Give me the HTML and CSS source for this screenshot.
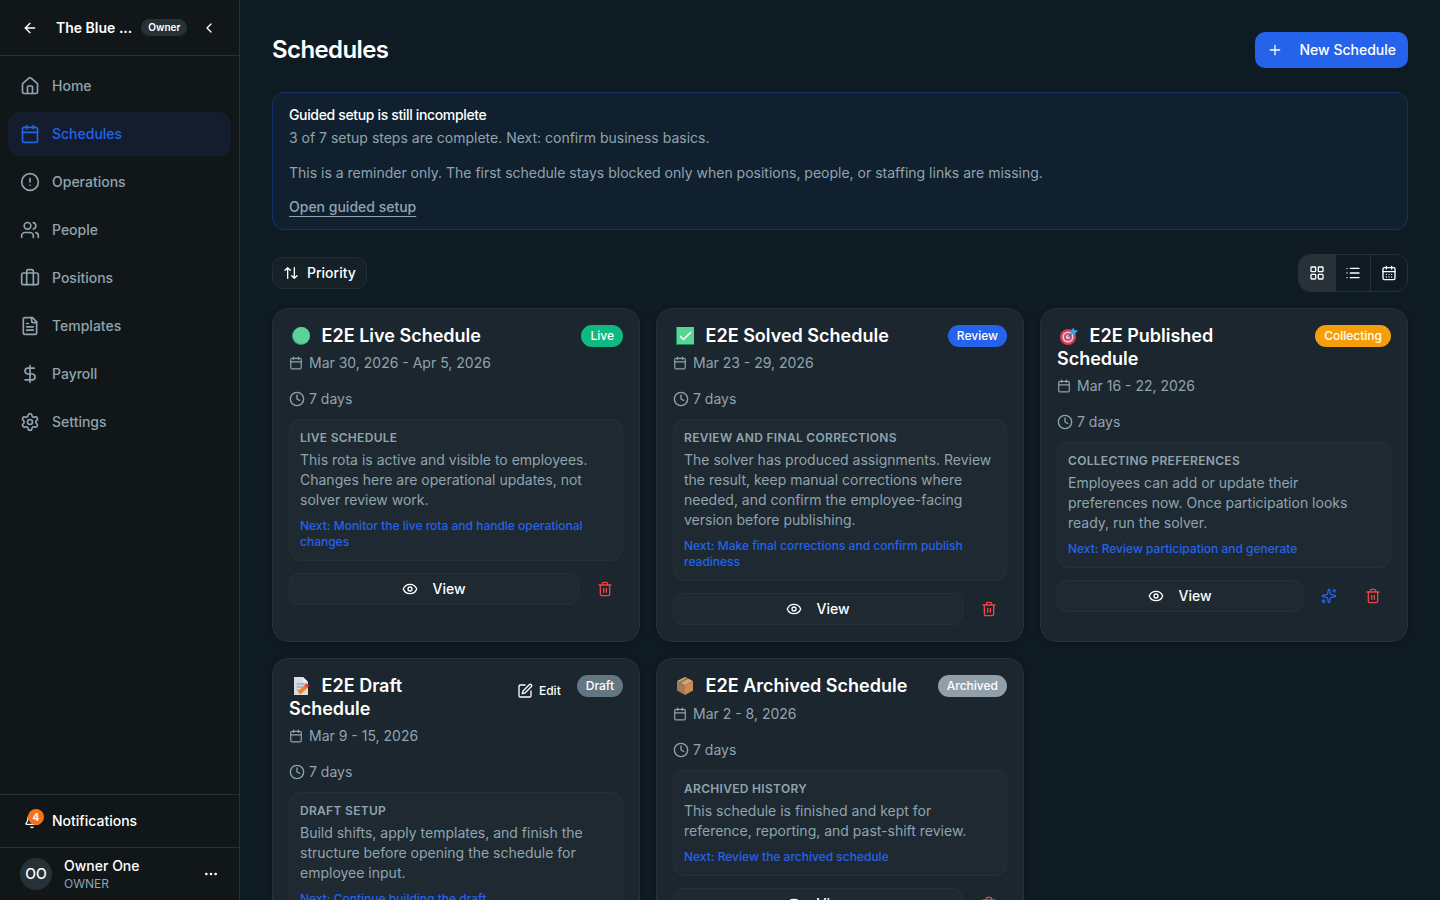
FILE: index.html
```html
<!DOCTYPE html>
<html lang="en">
  <head>
    <meta charset="UTF-8">
    <title>Schedules</title>
    <link rel="stylesheet" href="styles.css">
  </head>
  <body>
    <!-- shared icons -->
    <svg class="sprite">
      <symbol id="arrow-left" viewBox="0 0 24 24"><path d="m12 19-7-7 7-7"/><path d="M19 12H5"/></symbol>
      <symbol id="chevron-left" viewBox="0 0 24 24"><path d="m15 18-6-6 6-6"/></symbol>
      <symbol id="house" viewBox="0 0 24 24"><path d="M15 21v-8a1 1 0 0 0-1-1h-4a1 1 0 0 0-1 1v8"/><path d="M3 10a2 2 0 0 1 .709-1.528l7-5.999a2 2 0 0 1 2.582 0l7 5.999A2 2 0 0 1 21 10v9a2 2 0 0 1-2 2H5a2 2 0 0 1-2-2z"/></symbol>
      <symbol id="calendar" viewBox="0 0 24 24"><path d="M8 2v4M16 2v4"/><rect width="18" height="18" x="3" y="4" rx="2"/><path d="M3 10h18"/></symbol>
      <symbol id="calendar-days" viewBox="0 0 24 24"><path d="M8 2v4M16 2v4"/><rect width="18" height="18" x="3" y="4" rx="2"/><path d="M3 10h18M8 14h.01M12 14h.01M16 14h.01M8 18h.01M12 18h.01M16 18h.01"/></symbol>
      <symbol id="alert" viewBox="0 0 24 24"><circle cx="12" cy="12" r="10"/><path d="M12 8v4M12 16h.01"/></symbol>
      <symbol id="users" viewBox="0 0 24 24"><path d="M16 21v-2a4 4 0 0 0-4-4H6a4 4 0 0 0-4 4v2"/><circle cx="9" cy="7" r="4"/><path d="M22 21v-2a4 4 0 0 0-3-3.870M16 3.130a4 4 0 0 1 0 7.750"/></symbol>
      <symbol id="briefcase" viewBox="0 0 24 24"><path d="M16 20V4a2 2 0 0 0-2-2h-4a2 2 0 0 0-2 2v16"/><rect width="20" height="14" x="2" y="6" rx="2"/></symbol>
      <symbol id="file-text" viewBox="0 0 24 24"><path d="M15 2H6a2 2 0 0 0-2 2v16a2 2 0 0 0 2 2h12a2 2 0 0 0 2-2V7Z"/><path d="M14 2v4a2 2 0 0 0 2 2h4M10 9H8M16 13H8M16 17H8"/></symbol>
      <symbol id="dollar" viewBox="0 0 24 24"><path d="M12 2v20M17 5H9.500a3.500 3.500 0 0 0 0 7h5a3.500 3.500 0 0 1 0 7H6"/></symbol>
      <symbol id="settings" viewBox="0 0 24 24"><path d="M9.671 4.136a2.340 2.340 0 0 1 4.659 0 2.340 2.340 0 0 0 3.319 1.915 2.340 2.340 0 0 1 2.330 4.033 2.340 2.340 0 0 0 0 3.831 2.340 2.340 0 0 1-2.330 4.033 2.340 2.340 0 0 0-3.319 1.915 2.340 2.340 0 0 1-4.659 0 2.340 2.340 0 0 0-3.320-1.915 2.340 2.340 0 0 1-2.330-4.033 2.340 2.340 0 0 0 0-3.831A2.340 2.340 0 0 1 6.350 6.051a2.340 2.340 0 0 0 3.319-1.915"/><circle cx="12" cy="12" r="3"/></symbol>
      <symbol id="bell" viewBox="0 0 24 24"><path d="M10.268 21a2 2 0 0 0 3.464 0"/><path d="M3.262 15.326A1 1 0 0 0 4 17h16a1 1 0 0 0 .740-1.673C19.410 13.956 18 12.499 18 8A6 6 0 0 0 6 8c0 4.499-1.411 5.956-2.738 7.326"/></symbol>
      <symbol id="dots" viewBox="0 0 24 24"><circle cx="12" cy="12" r="1"/><circle cx="19" cy="12" r="1"/><circle cx="5" cy="12" r="1"/></symbol>
      <symbol id="plus" viewBox="0 0 24 24"><path d="M5 12h14M12 5v14"/></symbol>
      <symbol id="sort" viewBox="0 0 24 24"><path d="m3 8 4-4 4 4M7 4v16M21 16l-4 4-4-4M17 20V4"/></symbol>
      <symbol id="grid" viewBox="0 0 24 24"><rect width="7" height="7" x="3" y="3" rx="1"/><rect width="7" height="7" x="14" y="3" rx="1"/><rect width="7" height="7" x="14" y="14" rx="1"/><rect width="7" height="7" x="3" y="14" rx="1"/></symbol>
      <symbol id="list" viewBox="0 0 24 24"><path d="M3 5h.01M3 12h.01M3 19h.01M8 5h13M8 12h13M8 19h13"/></symbol>
      <symbol id="clock" viewBox="0 0 24 24"><circle cx="12" cy="12" r="10"/><path d="M12 6v6l4 2"/></symbol>
      <symbol id="eye" viewBox="0 0 24 24"><path d="M2.062 12.348a1 1 0 0 1 0-.696 10.750 10.750 0 0 1 19.876 0 1 1 0 0 1 0 .696 10.750 10.750 0 0 1-19.876 0"/><circle cx="12" cy="12" r="3"/></symbol>
      <symbol id="trash" viewBox="0 0 24 24"><path d="M3 6h18M19 6v14a2 2 0 0 1-2 2H7a2 2 0 0 1-2-2V6M8 6V4a2 2 0 0 1 2-2h4a2 2 0 0 1 2 2v2M10 11v6M14 11v6"/></symbol>
      <symbol id="sparkles" viewBox="0 0 24 24"><path d="M11.017 2.814a1 1 0 0 1 1.966 0l1.051 5.558a2 2 0 0 0 1.594 1.594l5.558 1.051a1 1 0 0 1 0 1.966l-5.558 1.051a2 2 0 0 0-1.594 1.594l-1.051 5.558a1 1 0 0 1-1.966 0l-1.051-5.558a2 2 0 0 0-1.594-1.594l-5.558-1.051a1 1 0 0 1 0-1.966l5.558-1.051a2 2 0 0 0 1.594-1.594z"/><path d="M20 2v4M22 4h-4"/><circle cx="4" cy="20" r="2"/></symbol>
      <symbol id="edit" viewBox="0 0 24 24"><path d="M12 3H5a2 2 0 0 0-2 2v14a2 2 0 0 0 2 2h14a2 2 0 0 0 2-2v-7"/><path d="M18.375 2.625a1 1 0 0 1 3 3l-9.013 9.014a2 2 0 0 1-.853.505l-2.873.840a.5.5 0 0 1-.620-.620l.840-2.873a2 2 0 0 1 .506-.852z"/></symbol>
    </svg>

    <div class="app">
      <aside class="sidebar">
        <header class="sidebar-head">
          <svg class="icon"><use href="#arrow-left"/></svg>
          <span class="workspace">The Blue ...</span>
          <span class="role">Owner</span>
          <svg class="icon"><use href="#chevron-left"/></svg>
        </header>

        <nav class="nav">
          <a class="nav-item"><svg class="icon icon-lg"><use href="#house"/></svg>Home</a>
          <a class="nav-item active"><svg class="icon icon-lg"><use href="#calendar"/></svg>Schedules</a>
          <a class="nav-item"><svg class="icon icon-lg"><use href="#alert"/></svg>Operations</a>
          <a class="nav-item"><svg class="icon icon-lg"><use href="#users"/></svg>People</a>
          <a class="nav-item"><svg class="icon icon-lg"><use href="#briefcase"/></svg>Positions</a>
          <a class="nav-item"><svg class="icon icon-lg"><use href="#file-text"/></svg>Templates</a>
          <a class="nav-item"><svg class="icon icon-lg"><use href="#dollar"/></svg>Payroll</a>
          <a class="nav-item"><svg class="icon icon-lg"><use href="#settings"/></svg>Settings</a>
        </nav>

        <div class="notifications">
          <span class="bell"><svg class="icon"><use href="#bell"/></svg><span class="count">4</span></span>
          Notifications
        </div>
        <div class="user">
          <span class="avatar">OO</span>
          <div class="user-text">
            <div class="user-name">Owner One</div>
            <div class="user-role">OWNER</div>
          </div>
          <svg class="icon"><use href="#dots"/></svg>
        </div>
      </aside>

      <main class="main">
        <header class="page-head">
          <h1>Schedules</h1>
          <button class="btn-new"><svg class="icon"><use href="#plus"/></svg>New Schedule</button>
        </header>

        <section class="banner">
          <h2>Guided setup is still incomplete</h2>
          <p>3 of 7 setup steps are complete. Next: confirm business basics.</p>
          <p>This is a reminder only. The first schedule stays blocked only when positions, people, or staffing links are missing.</p>
          <a>Open guided setup</a>
        </section>

        <div class="toolbar">
          <button class="btn-sort"><svg class="icon"><use href="#sort"/></svg>Priority</button>
          <div class="views">
            <button class="selected"><svg class="icon"><use href="#grid"/></svg></button>
            <button><svg class="icon"><use href="#list"/></svg></button>
            <button><svg class="icon"><use href="#calendar-days"/></svg></button>
          </div>
        </div>

        <section class="cards">
          <article class="card">
            <div class="card-head">
              <h3><svg class="emoji" viewBox="0 0 18 18"><circle cx="9" cy="9" r="9" fill="#3f9a92"/><circle cx="9.500" cy="8.500" r="8.500" fill="#5bd493"/></svg>E2E Live Schedule</h3>
              <span class="badge live">Live</span>
            </div>
            <div class="date"><svg class="icon icon-sm"><use href="#calendar"/></svg>Mar 30, 2026 - Apr 5, 2026</div>
            <div class="days"><svg class="icon"><use href="#clock"/></svg>7 days</div>
            <div class="stage">
              <h4>Live schedule</h4>
              <p>This rota is active and visible to employees. Changes here are operational updates, not solver review work.</p>
              <div class="next">Next: Monitor the live rota and handle operational changes</div>
            </div>
            <div class="actions">
              <button class="btn-view"><svg class="icon"><use href="#eye"/></svg>View</button>
              <button class="btn-icon danger"><svg class="icon"><use href="#trash"/></svg></button>
            </div>
          </article>

          <article class="card">
            <div class="card-head">
              <h3><svg class="emoji" viewBox="0 0 18 18"><path fill="#168b61" d="M0 0h18v18H0z"/><path fill="#5bd493" d="M1 0h17v17H1z"/><path d="m4 9 3.500 3.500L15 5" fill="none" stroke="#fff" stroke-width="1.500"/></svg>E2E Solved Schedule</h3>
              <span class="badge review">Review</span>
            </div>
            <div class="date"><svg class="icon icon-sm"><use href="#calendar"/></svg>Mar 23 - 29, 2026</div>
            <div class="days"><svg class="icon"><use href="#clock"/></svg>7 days</div>
            <div class="stage">
              <h4>Review and final corrections</h4>
              <p>The solver has produced assignments. Review the result, keep manual corrections where needed, and confirm the employee-facing version before publishing.</p>
              <div class="next">Next: Make final corrections and confirm publish readiness</div>
            </div>
            <div class="actions">
              <button class="btn-view"><svg class="icon"><use href="#eye"/></svg>View</button>
              <button class="btn-icon danger"><svg class="icon"><use href="#trash"/></svg></button>
            </div>
          </article>

          <article class="card">
            <div class="card-head">
              <h3><svg class="emoji" viewBox="0 0 18 18"><circle cx="8" cy="10" r="8" fill="#d83b56"/><circle cx="8" cy="10" r="5.600" fill="#e4d3e2"/><circle cx="8" cy="10" r="4.100" fill="#d9486a"/><circle cx="8" cy="10" r="2" fill="#ead6e3"/><path d="m8 10 5-5" stroke="#2478b8" stroke-width="1.300"/><path fill="#32a5e8" d="m10.500 4.500 3-4 1 2.500 3.500.5-3.500 4-3.500-.5z"/></svg>E2E Published<br>Schedule</h3>
              <span class="badge collecting">Collecting</span>
            </div>
            <div class="date"><svg class="icon icon-sm"><use href="#calendar"/></svg>Mar 16 - 22, 2026</div>
            <div class="days"><svg class="icon"><use href="#clock"/></svg>7 days</div>
            <div class="stage">
              <h4>Collecting preferences</h4>
              <p>Employees can add or update their preferences now. Once participation looks ready, run the solver.</p>
              <div class="next">Next: Review participation and generate</div>
            </div>
            <div class="actions">
              <button class="btn-view"><svg class="icon"><use href="#eye"/></svg>View</button>
              <button class="btn-icon magic"><svg class="icon"><use href="#sparkles"/></svg></button>
              <button class="btn-icon danger"><svg class="icon"><use href="#trash"/></svg></button>
            </div>
          </article>

          <article class="card">
            <div class="card-head">
              <h3><svg class="emoji" viewBox="0 0 18 18"><path fill="#d9dce1" d="M2 0h9l5 5v13H2z"/><path fill="#f2f3f5" d="M11 0v5h5z"/><path d="M4.500 7h8M4.500 10h7M4.500 13h4" stroke="#8795a6"/><path d="m7 16 7.500-7" stroke="#f58220" stroke-width="3.800"/><path d="m13.700 9.700 2.300-2.100" stroke="#e03f56" stroke-width="3.800"/></svg>E2E Draft<br>Schedule</h3>
              <button class="btn-edit"><svg class="icon"><use href="#edit"/></svg>Edit</button>
              <span class="badge draft">Draft</span>
            </div>
            <div class="date"><svg class="icon icon-sm"><use href="#calendar"/></svg>Mar 9 - 15, 2026</div>
            <div class="days"><svg class="icon"><use href="#clock"/></svg>7 days</div>
            <div class="stage">
              <h4>Draft setup</h4>
              <p>Build shifts, apply templates, and finish the structure before opening the schedule for employee input.</p>
              <div class="next">Next: Continue building the draft</div>
            </div>
            <div class="actions">
              <button class="btn-view"><svg class="icon"><use href="#eye"/></svg>View</button>
              <button class="btn-icon danger"><svg class="icon"><use href="#trash"/></svg></button>
            </div>
          </article>

          <article class="card">
            <div class="card-head">
              <h3><svg class="emoji" viewBox="0 0 18 18"><path fill="#d8a274" d="m9 0 8 4-8 4.500L1 4z"/><path fill="#a87957" d="m1 4 8 4.500V18l-8-4.500z"/><path fill="#c98b4e" d="m17 4-8 4.500V18l8-4.500z"/><path fill="#8b7a56" d="m10.500.8 2 1L5 6v3L3 8V5z"/></svg>E2E Archived Schedule</h3>
              <span class="badge archived">Archived</span>
            </div>
            <div class="date"><svg class="icon icon-sm"><use href="#calendar"/></svg>Mar 2 - 8, 2026</div>
            <div class="days"><svg class="icon"><use href="#clock"/></svg>7 days</div>
            <div class="stage">
              <h4>Archived history</h4>
              <p>This schedule is finished and kept for reference, reporting, and past-shift review.</p>
              <div class="next">Next: Review the archived schedule</div>
            </div>
            <div class="actions">
              <button class="btn-view"><svg class="icon"><use href="#eye"/></svg>View</button>
              <button class="btn-icon danger"><svg class="icon"><use href="#trash"/></svg></button>
            </div>
          </article>
        </section>
      </main>
    </div>
  </body>
</html>
```

FILE: styles.css
```css
* { box-sizing: border-box; }
html, body { margin: 0; height: 100%; overflow: hidden; }
body {
    background: #0f1b22;
    color: #fff;
    font: 14px/20px Inter, sans-serif;
}
h1, h2, h3, h4, p { margin: 0; }
button {
    margin: 0;
    padding: 0;
    border: 0;
    background: none;
    color: inherit;
    font: inherit;
    font-weight: 500;
    display: flex;
    align-items: center;
    justify-content: center;
}

.sprite { display: none; }
.icon {
    width: 16px;
    height: 16px;
    flex: none;
    fill: none;
    stroke: currentColor;
    stroke-width: 2;
    stroke-linecap: round;
    stroke-linejoin: round;
}
.icon-lg { width: 20px; height: 20px; }
.icon-sm { width: 14px; height: 14px; }

.app { display: flex; height: 100%; overflow: hidden; }

/* sidebar */
.sidebar {
    width: 240px;
    flex: none;
    display: flex;
    flex-direction: column;
    background: #111618;
    border-right: 1px solid #263238;
}
.sidebar-head {
    height: 56px;
    display: flex;
    align-items: center;
    padding: 0 22px;
    border-bottom: 1px solid #263238;
}
.workspace { margin-left: 18px; font-weight: 600; white-space: nowrap; }
.role {
    margin: 0 auto 0 9px;
    padding: 0 7px;
    border-radius: 9px;
    background: #263238;
    font-size: 10px;
    font-weight: 600;
    line-height: 17px;
}
.nav {
    flex: 1;
    display: flex;
    flex-direction: column;
    gap: 4px;
    padding: 8px;
}
.nav-item {
    height: 44px;
    display: flex;
    align-items: center;
    gap: 12px;
    padding: 0 12px;
    border-radius: 12px;
    color: #90a4ae;
    font-weight: 500;
}
.nav-item.active { background: #141d2e; color: #2563eb; }
.notifications {
    height: 53px;
    display: flex;
    align-items: center;
    gap: 12px;
    padding-left: 24px;
    border-top: 1px solid #263238;
    font-weight: 500;
}
.bell { position: relative; display: flex; }
.count {
    position: absolute;
    left: 4px;
    top: -4px;
    width: 16px;
    height: 16px;
    border-radius: 50%;
    background: #f97316;
    font-size: 10px;
    font-weight: 700;
    line-height: 16px;
    text-align: center;
}
.user {
    height: 53px;
    display: flex;
    align-items: center;
    gap: 12px;
    padding: 0 20px;
    border-top: 1px solid #263238;
}
.avatar {
    width: 32px;
    height: 32px;
    border-radius: 50%;
    background: #263238;
    font-weight: 500;
    line-height: 32px;
    text-align: center;
}
.user-text { flex: 1; }
.user-name { font-weight: 500; line-height: 18px; }
.user-role { color: #90a4ae; font-size: 12px; line-height: 17px; }

/* page */
.main { flex: 1; padding: 32px 32px 0; }
.page-head { display: flex; align-items: center; justify-content: space-between; }
h1 { font-size: 24px; font-weight: 600; line-height: 32px; letter-spacing: -0.025em; }
.btn-new {
    height: 36px;
    gap: 16px;
    padding: 0 12px;
    border-radius: 10px;
    background: #2563eb;
}
.banner {
    height: 138px;
    margin-top: 24px;
    padding: 12px 16px;
    border: 1px solid #17316c;
    border-radius: 12px;
    background: #10202f;
    color: #90a4ae;
}
.banner h2 {
    color: #fff;
    font-size: 14px;
    font-weight: 500;
    letter-spacing: -0.025em;
    margin-bottom: 2px;
}
.banner p { line-height: 22.75px; margin-bottom: 12px; }
.banner a {
    font-weight: 500;
    text-decoration: underline;
    text-underline-offset: 4px;
}

.toolbar {
    display: flex;
    align-items: center;
    justify-content: space-between;
    margin: 24px 0 16px;
}
.btn-sort {
    height: 32px;
    gap: 8px;
    padding: 0 10px;
    border: 1px solid #222e35;
    border-radius: 10px;
    background: #152127;
}
.views {
    display: flex;
    border: 1px solid #263238;
    border-radius: 12px;
    overflow: hidden;
}
.views button { width: 36px; height: 36px; }
.views button:nth-child(2) { box-shadow: inset -1px 0 #263238; }
.views .selected { background: #263238; box-shadow: 1px 0 #263238; }

/* schedule cards */
.cards { display: grid; grid-template-columns: repeat(3, 1fr); gap: 16px; }
.card {
    padding: 16px;
    border: 1px solid #263238;
    border-radius: 16px;
    background: #1b262e;
    box-shadow: 0 1px 4px rgba(0, 0, 0, .25);
}
.card-head { display: flex; align-items: flex-start; gap: 8px; margin-bottom: 5.8px; }
.card h3 { flex: 1; font-size: 18px; font-weight: 600; line-height: 22.5px; }
.emoji { width: 18px; height: 18px; margin: 0 11.6px 0 3px; vertical-align: -3px; }
.badge {
    padding: 0 9px;
    border-radius: 11px;
    font-size: 12px;
    font-weight: 500;
    line-height: 22px;
}
.live { background: #10b981; }
.review { background: #2563eb; }
.collecting { background: #f59e0b; }
.draft { background: #64767f; }
.archived { background: #919fab; }
.btn-edit { height: 32px; gap: 6px; padding: 0 8px; font-size: 12px; }

.date, .days { display: flex; align-items: center; color: #90a4ae; }
.date { gap: 6px; margin-bottom: 16px; }
.days { gap: 4px; margin-bottom: 10px; }
.stage {
    padding: 10px;
    border: 1px solid #26323a;
    border-radius: 12px;
    background: #1e2931;
    color: #90a4ae;
}
.stage h4 {
    font-size: 12px;
    font-weight: 600;
    line-height: 16px;
    letter-spacing: 0.025em;
    text-transform: uppercase;
    margin-bottom: 4px;
}
.next {
    margin-top: 8px;
    color: #2563eb;
    font-size: 12px;
    font-weight: 500;
    line-height: 16px;
}
.actions { display: flex; gap: 8px; margin-top: 12px; }
.btn-view {
    flex: 1;
    height: 32px;
    gap: 14px;
    border: 1px solid #26323a;
    border-radius: 10px;
    background: #1e2931;
}
.btn-icon { width: 36px; height: 32px; }
.danger { color: #ef4444; }
.magic { color: #2563eb; }
```
